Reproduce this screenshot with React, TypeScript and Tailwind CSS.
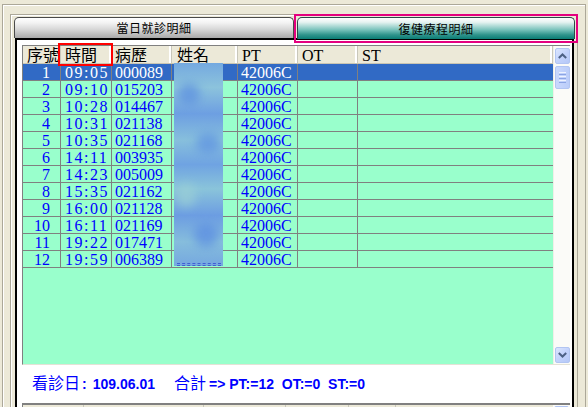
import React from 'react';

const rows: [string, string, string][] = [
  ['1', '09:05', '000089'],
  ['2', '09:10', '015203'],
  ['3', '10:28', '014467'],
  ['4', '10:31', '021138'],
  ['5', '10:35', '021168'],
  ['6', '14:11', '003935'],
  ['7', '14:23', '005009'],
  ['8', '15:35', '021162'],
  ['9', '16:00', '021128'],
  ['10', '16:11', '021169'],
  ['11', '19:22', '017471'],
  ['12', '19:59', '006389'],
];

const headers = [
  { w: 'w-[38px]', label: '序號', pad: 'pl-[4px]' },
  { w: 'w-[51px]', label: '時間', pad: 'pl-[4px]' },
  { w: 'w-[60px]', label: '病歷', pad: 'pl-[3px]' },
  { w: 'w-[66px]', label: '姓名', pad: 'pl-[5px]' },
  { w: 'w-[60px]', label: 'PT', pad: 'pl-[4px]' },
  { w: 'w-[60px]', label: 'OT', pad: 'pl-[4px]' },
  { w: 'w-[195px]', label: 'ST', pad: 'pl-[4px]' },
];

function Chevron({ up }: { up: boolean }) {
  return (
    <svg width="9" height="6" viewBox="0 0 9 6" className="block">
      <path
        d={up ? 'M0.8 5 L4.5 1.5 L8.2 5' : 'M0.8 1 L4.5 4.5 L8.2 1'}
        fill="none"
        stroke="#4D6185"
        strokeWidth="2"
      />
    </svg>
  );
}

function ScrollButton({ up }: { up: boolean }) {
  return (
    <div className="w-[15px] h-[16px] mx-auto rounded-[2px] border border-[#B2C5F2] bg-[linear-gradient(135deg,#DCE6FE_0%,#C3D3FC_50%,#B5C8F7_100%)] flex items-center justify-center">
      <Chevron up={up} />
    </div>
  );
}

export default function App() {
  const serif = "font-['Liberation_Serif','Noto_Sans_CJK_TC',serif]";
  return (
    <div className="w-[588px] h-[407px] overflow-hidden bg-[#ECE9D8] pt-[4px] pl-[2px] relative">
      {/* outer frame */}
      <div className="w-[584px] h-[420px] border-l border-t border-r border-[#ACA899] shadow-[inset_1px_1px_0_#ffffff] pl-[7px] pt-[9px]">
        {/* inner frame */}
        <div className="w-[568px] h-[420px] border-l border-t border-r border-[#ACA899] shadow-[inset_1px_1px_0_#ffffff]">
          {/* tabs */}
          <div className="flex pt-[2px] pl-[3px] gap-[3px] font-['Noto_Sans_CJK_TC',sans-serif] text-[12px] text-black">
            <div className="w-[280px] h-[21px] rounded-t-[5px] border border-b-0 border-[#4a4a4a] bg-[linear-gradient(180deg,#ffffff_0%,#f2f2f2_25%,#d4d4d4_60%,#a9a9a9_100%)] flex items-center justify-center tracking-[0.5px] leading-none">
              當日就診明細
            </div>
            <div className="w-[278px] h-[22px] rounded-t-[5px] border border-b-0 border-[#2a4a48] bg-[linear-gradient(180deg,#ffffff_0%,#e6f3f1_20%,#7cc4bd_55%,#2f948c_80%,#0a7c74_100%)] flex items-center justify-center tracking-[0.5px] leading-none">
              復健療程明細
            </div>
          </div>
          {/* content panel */}
          <div className="ml-[4px] mt-[-1px] w-[559px] h-[400px] bg-white border-l-2 border-t-2 border-r-2 border-black pl-[5px] pt-[5px]">
            {/* grid */}
            <div className="w-[548px] h-[320px] flex border-l border-t border-[#808080] border-b border-b-[#E4E2D6]">
              <div className={`w-[530px] h-full flex flex-col ${serif} text-[16px]`}>
                {/* header */}
                <div className="flex h-[18px] shrink-0 bg-[#ECE9D8] border-b border-[#C9C5B3] text-black">
                  {headers.map((h) => (
                    <div
                      key={h.label}
                      className={`${h.w} ${h.pad} shrink-0 h-full border-r border-[#C9C7BA] shadow-[inset_-2px_0_0_#ffffff] overflow-hidden whitespace-nowrap leading-[19px]`}
                    >
                      {h.label}
                    </div>
                  ))}
                </div>
                {/* rows */}
                <div className="relative flex-1 bg-[#99FFCC]">
                  {rows.map((r, i) => {
                    const sel = i === 0;
                    return (
                      <div
                        key={r[0]}
                        className={`flex h-[17px] border-b border-[#808080] leading-[18px] whitespace-nowrap ${
                          sel ? 'bg-[#316AC5] text-white' : 'text-[#0000FF]'
                        }`}
                      >
                        <div className="w-[38px] shrink-0 border-r border-[#808080] text-right pr-[10px]">{r[0]}</div>
                        <div className="w-[51px] shrink-0 border-r border-[#808080] pl-[4px] tracking-[1.5px]">{r[1]}</div>
                        <div className="w-[60px] shrink-0 border-r border-[#808080] pl-[3px]">{r[2]}</div>
                        <div className="w-[66px] shrink-0 border-r border-[#808080]"></div>
                        <div className="w-[60px] shrink-0 border-r border-[#808080] pl-[3px]">42006C</div>
                        <div className="w-[60px] shrink-0 border-r border-[#808080]"></div>
                        <div className="w-[195px] shrink-0"></div>
                      </div>
                    );
                  })}
                  {/* blurred name column */}
                  <div className="absolute left-[151px] top-[-1px] w-[49px] h-[203px] overflow-hidden bg-[linear-gradient(180deg,#74a9e0_0%,#8cc3dc_12%,#6d9fe2_25%,#87bfdc_38%,#6fa3e2_50%,#8ac4da_62%,#6c9de2_75%,#86bddc_88%,#75a8e0_100%)]">
                    <div className="absolute left-[4px] top-[20px] w-[22px] h-[22px] rounded-full bg-[#5c8fe0] blur-[5px] opacity-70"></div>
                    <div className="absolute left-[22px] top-[70px] w-[24px] h-[20px] rounded-full bg-[#5e92e2] blur-[5px] opacity-70"></div>
                    <div className="absolute left-[2px] top-[120px] w-[20px] h-[24px] rounded-full bg-[#9bd0d6] blur-[5px] opacity-70"></div>
                    <div className="absolute left-[20px] top-[160px] w-[24px] h-[24px] rounded-full bg-[#5a8ce2] blur-[5px] opacity-70"></div>
                  </div>
                  <div className="absolute left-[154px] top-[199px] w-[44px] h-[3px] border-t border-b border-dashed border-[#2a3fd0] opacity-70"></div>
                </div>
              </div>
              {/* scrollbar */}
              <div className="w-[17px] h-full bg-[#FBFBF8] border-l border-[#F0EFE8] flex flex-col pt-[2px] pb-[1px]">
                <ScrollButton up />
                <div className="w-[15px] h-[23px] mx-auto mt-[2px] rounded-[2px] border border-[#B2C5F2] bg-[linear-gradient(90deg,#C9D8FD_0%,#BBCDF9_100%)] flex flex-col items-center justify-center gap-[1px]">
                  <div className="w-[7px] h-[1px] bg-[#EEF3FE]"></div>
                  <div className="w-[7px] h-[1px] bg-[#8CA5E4]"></div>
                  <div className="w-[7px] h-[1px] bg-[#EEF3FE]"></div>
                  <div className="w-[7px] h-[1px] bg-[#8CA5E4]"></div>
                  <div className="w-[7px] h-[1px] bg-[#EEF3FE]"></div>
                  <div className="w-[7px] h-[1px] bg-[#8CA5E4]"></div>
                </div>
                <div className="flex-1"></div>
                <ScrollButton up={false} />
              </div>
            </div>
            {/* summary line */}
            <div className="h-[38px] pl-[10px] pt-[7px] leading-[20px] whitespace-pre text-[#0000FF] font-['Liberation_Sans',sans-serif] text-[14px] font-bold">
              <span className="font-['Noto_Sans_CJK_TC',sans-serif] font-normal text-[16px]">看診日</span>
              <span className="ml-[2px]">:</span>
              <span className="ml-[6px]">109.06.01</span>
              <span className="ml-[19px] font-['Noto_Sans_CJK_TC',sans-serif] font-normal text-[16px]">合計</span>
              <span className="ml-[3px]">{'=> PT:=12  OT:=0  ST:=0'}</span>
            </div>
            {/* second grid (cut off) */}
            <div className="w-[548px] h-[20px] flex border-t-2 border-l border-[#808080] bg-[#ECE9D8]">
              <div className="w-[61px] shrink-0 border-r border-[#C9C7BA]"></div>
              <div className="w-[120px] shrink-0 border-r border-[#C9C7BA]"></div>
              <div className="w-[82px] shrink-0 border-r border-[#C9C7BA]"></div>
              <div className="w-[63px] shrink-0 border-r border-[#C9C7BA]"></div>
              <div className="w-[47px] shrink-0 border-r border-[#C9C7BA]"></div>
              <div className="w-[157px] shrink-0"></div>
              <div className="w-[17px] shrink-0 bg-[#FBFBF8] pt-[1px]">
                <ScrollButton up />
              </div>
            </div>
          </div>
        </div>
      </div>
      {/* annotation boxes */}
      <div className="absolute left-[58px] top-[43px] w-[55px] h-[23px] border-2 border-[#FF0000]"></div>
      <div className="absolute left-[294px] top-[14px] w-[284px] h-[29px] border-2 border-[#E4007F]"></div>
    </div>
  );
}
